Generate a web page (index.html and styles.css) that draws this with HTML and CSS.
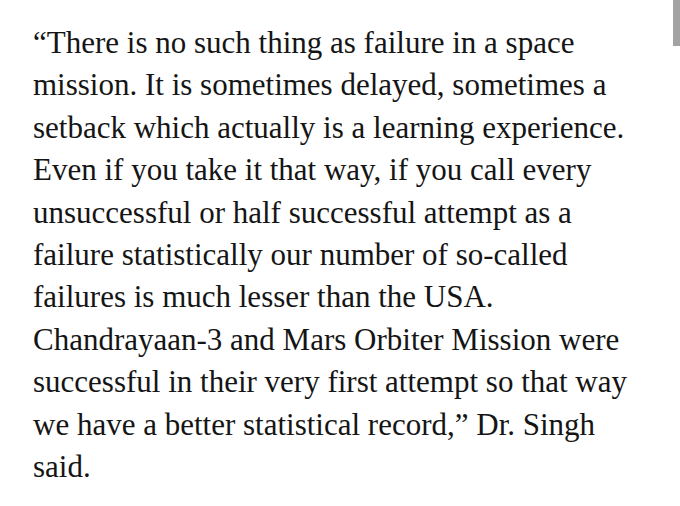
FILE: index.html
```html
<!DOCTYPE html>
<html lang="en">
<head>
<meta charset="utf-8">
<title>Quote</title>
<link rel="stylesheet" href="styles.css">
</head>
<body>
<div class="page">
  <p class="quote">“There is no such thing as failure in a space<br>mission. It is sometimes delayed, sometimes a<br>setback which actually is a learning experience.<br>Even if you take it that way, if you call every<br>unsuccessful or half successful attempt as a<br>failure statistically our number of so-called<br>failures is much lesser than the USA.<br>Chandrayaan-3 and Mars Orbiter Mission were<br>successful in their very first attempt so that way<br>we have a better statistical record,” Dr. Singh<br>said.</p>
</div>
<div class="scrollbar"></div>
</body>
</html>
```
FILE: styles.css
```css
html, body {
  margin: 0;
  padding: 0;
  background: #ffffff;
}
.page {
  padding: 22px 0 0 33px;
}
.quote {
  margin: 0;
  font-family: "Liberation Serif", "DejaVu Serif", serif;
  font-size: 31px;
  line-height: 42.4px;
  color: #151515;
  white-space: nowrap;
}
.scrollbar {
  position: fixed;
  top: 0;
  right: 0;
  width: 7px;
  height: 46px;
  background: #a3a3a3;
}
```
